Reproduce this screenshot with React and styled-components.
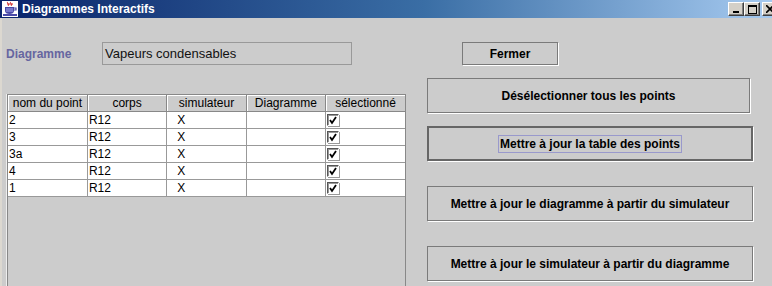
import React from 'react';
import styled, { createGlobalStyle, css } from 'styled-components';

const GlobalStyle = createGlobalStyle`
    html, body {
        margin: 0;
        padding: 0;
        background: #cccccc;
    }
    body {
        font-family: "Liberation Sans", Arial, sans-serif;
    }
`

const Window = styled.div`
    width: 772px;
    height: 286px;
    display: flex;
    flex-direction: column;
    overflow: hidden;
    background: #cccccc;
`

const TitleBar = styled.div`
    height: 18px;
    flex: none;
    display: flex;
    align-items: center;
    padding-left: 2px;
    background: linear-gradient(to right, #0a246a 0%, #3a6ea5 55%, #a6caf0 100%);
`

const Title = styled.span`
    margin-left: 4px;
    color: #fff;
    font-family: "Liberation Sans", Arial, sans-serif;
    font-weight: bold;
    font-size: 12px;
`

const Controls = styled.div`
    margin-left: auto;
    display: flex;
    margin-right: -6px;
`

const CtrlButton = styled.div`
    width: 16px;
    height: 14px;
    box-sizing: border-box;
    background: #d4d0c8;
    border-top: 1px solid #fff;
    border-left: 1px solid #fff;
    border-right: 1px solid #404040;
    border-bottom: 1px solid #404040;
    box-shadow: inset -1px -1px 0 #808080;
    display: flex;
    align-items: center;
    justify-content: center;
    ${props => props.gap && css`margin-left: 2px;`}
`

const Content = styled.div`
    flex: 1;
    min-height: 0;
    display: grid;
    grid-template-columns: 418px 1fr;
    border-left: 2px solid #dcd8d0;
`

const LeftCol = styled.div`
    display: flex;
    flex-direction: column;
    padding: 24px 0 0 4px;
    min-height: 0;
`

const RightCol = styled.div`
    display: flex;
    flex-direction: column;
    align-items: flex-start;
    padding: 24px 0 0 7px;
`

const FieldRow = styled.div`
    display: flex;
    align-items: center;
    height: 23px;
`

const Label = styled.span`
    width: 96px;
    color: #6666a0;
    font-weight: bold;
    font-size: 12px;
`

const Field = styled.div`
    width: 250px;
    height: 23px;
    box-sizing: border-box;
    border: 1px solid #999;
    padding: 0 2px;
    display: flex;
    align-items: center;
    font-size: 13px;
    color: #111;
`

const ScrollPane = styled.div`
    margin: 29px 0 0 1px;
    width: 399px;
    flex: 1;
    box-sizing: border-box;
    border: 1px solid #888;
    border-bottom: none;
    box-shadow: -1px 0 0 #eee;
`

const Table = styled.table`
    width: 100%;
    border-collapse: collapse;
    table-layout: fixed;
    font-size: 12px;
    color: #000;
`

const HeadCell = styled.th`
    height: 16px;
    padding: 0;
    font-weight: normal;
    text-align: center;
    background: #cccccc;
    border-right: 1px solid #888;
    border-bottom: 1px solid #888;
    box-shadow: inset 1px 1px 0 #fff;
    &:last-child {
        border-right: none;
    }
`

const Cell = styled.td`
    height: 16px;
    padding: 0 0 0 ${props => props.indent || 1}px;
    background: #fff;
    border-right: 1px solid #999;
    border-bottom: 1px solid #999;
    white-space: nowrap;
    &:last-child {
        border-right: none;
    }
`

const CheckBox = styled.span`
    display: block;
    width: 12px;
    height: 12px;
    box-sizing: border-box;
    border-top: 1px solid #555;
    border-left: 1px solid #555;
    border-right: 1px solid #fff;
    border-bottom: 1px solid #fff;
    box-shadow: inset 1px 1px 0 #999, 1px 1px 0 #999;
    background: #fff;
`

const Button = styled.div`
    box-sizing: border-box;
    width: ${props => props.w}px;
    height: ${props => props.h || 35}px;
    margin-left: ${props => props.ml || 0}px;
    margin-top: ${props => props.mt || 0}px;
    border: ${props => (props.focused ? 2 : 1)}px solid ${props => (props.focused ? '#666' : '#7a7a7a')};
    box-shadow: 1px 1px 0 #fff;
    display: flex;
    align-items: center;
    justify-content: center;
    font-weight: bold;
    font-size: 12px;
    color: #000;
`

const FocusRing = styled.span`
    border: 1px solid #9999cc;
    padding: 1px 1px;
`

const rows = [
    ['2', 'R12', 'X'],
    ['3', 'R12', 'X'],
    ['3a', 'R12', 'X'],
    ['4', 'R12', 'X'],
    ['1', 'R12', 'X'],
];

const CupIcon = () => (
    <svg width="16" height="16" viewBox="0 0 16 16">
        <rect x="0" y="0" width="16" height="16" fill="#fff" />
        <path d="M6 1 C4 2 8 3 6 5 M9 1 C7 2 11 3 9 5 M5 3 h6" stroke="#d02020" strokeWidth="1" fill="none" />
        <path d="M3 6 h9 v4 c0 2 -2 3 -4.5 3 S3 12 3 10 Z" fill="#4a4aa8" />
        <path d="M12 7 h2 v2 h-2" stroke="#4a4aa8" strokeWidth="1.2" fill="none" />
        <rect x="1" y="13" width="14" height="2" fill="#4a4aa8" />
        <path d="M4 8 h7 M4 10 h7" stroke="#c0c0ff" strokeWidth="0.8" />
    </svg>
);

export default function App() {
    return (
        <Window>
            <GlobalStyle />
            <TitleBar>
                <CupIcon />
                <Title>Diagrammes Interactifs</Title>
                <Controls>
                    <CtrlButton>
                        <svg width="8" height="8" viewBox="0 0 8 8"><rect x="1" y="6" width="6" height="2" fill="#000" /></svg>
                    </CtrlButton>
                    <CtrlButton>
                        <svg width="9" height="9" viewBox="0 0 9 9"><rect x="0.5" y="0.5" width="8" height="8" fill="none" stroke="#000" /><rect x="0" y="0" width="9" height="2" fill="#000" /></svg>
                    </CtrlButton>
                    <CtrlButton gap>
                        <svg width="8" height="8" viewBox="0 0 8 8"><path d="M0 0 L8 8 M8 0 L0 8" stroke="#000" strokeWidth="1.6" /></svg>
                    </CtrlButton>
                </Controls>
            </TitleBar>
            <Content>
                <LeftCol>
                    <FieldRow>
                        <Label>Diagramme</Label>
                        <Field>Vapeurs condensables</Field>
                    </FieldRow>
                    <ScrollPane>
                        <Table>
                            <thead>
                                <tr>
                                    <HeadCell>nom du point</HeadCell>
                                    <HeadCell>corps</HeadCell>
                                    <HeadCell>simulateur</HeadCell>
                                    <HeadCell>Diagramme</HeadCell>
                                    <HeadCell>sélectionné</HeadCell>
                                </tr>
                            </thead>
                            <tbody>
                                {rows.map(r => (
                                    <tr key={r[0]}>
                                        <Cell>{r[0]}</Cell>
                                        <Cell>{r[1]}</Cell>
                                        <Cell indent={10}>{r[2]}</Cell>
                                        <Cell></Cell>
                                        <Cell>
                                            <CheckBox>
                                                <svg width="10" height="10" viewBox="0 0 10 10" style={{ display: 'block' }}>
                                                    <path d="M2 5 L4 8 L8 2" stroke="#000" strokeWidth="1.8" fill="none" />
                                                </svg>
                                            </CheckBox>
                                        </Cell>
                                    </tr>
                                ))}
                            </tbody>
                        </Table>
                    </ScrollPane>
                </LeftCol>
                <RightCol>
                    <Button w={96} h={23} ml={35}>Fermer</Button>
                    <Button w={323} mt={13}>Désélectionner tous les points</Button>
                    <Button w={326} mt={13} focused>
                        <FocusRing>Mettre à jour la table des points</FocusRing>
                    </Button>
                    <Button w={326} mt={25}>Mettre à jour le diagramme à partir du simulateur</Button>
                    <Button w={326} mt={25}>Mettre à jour le simulateur à partir du diagramme</Button>
                </RightCol>
            </Content>
        </Window>
    );
}
